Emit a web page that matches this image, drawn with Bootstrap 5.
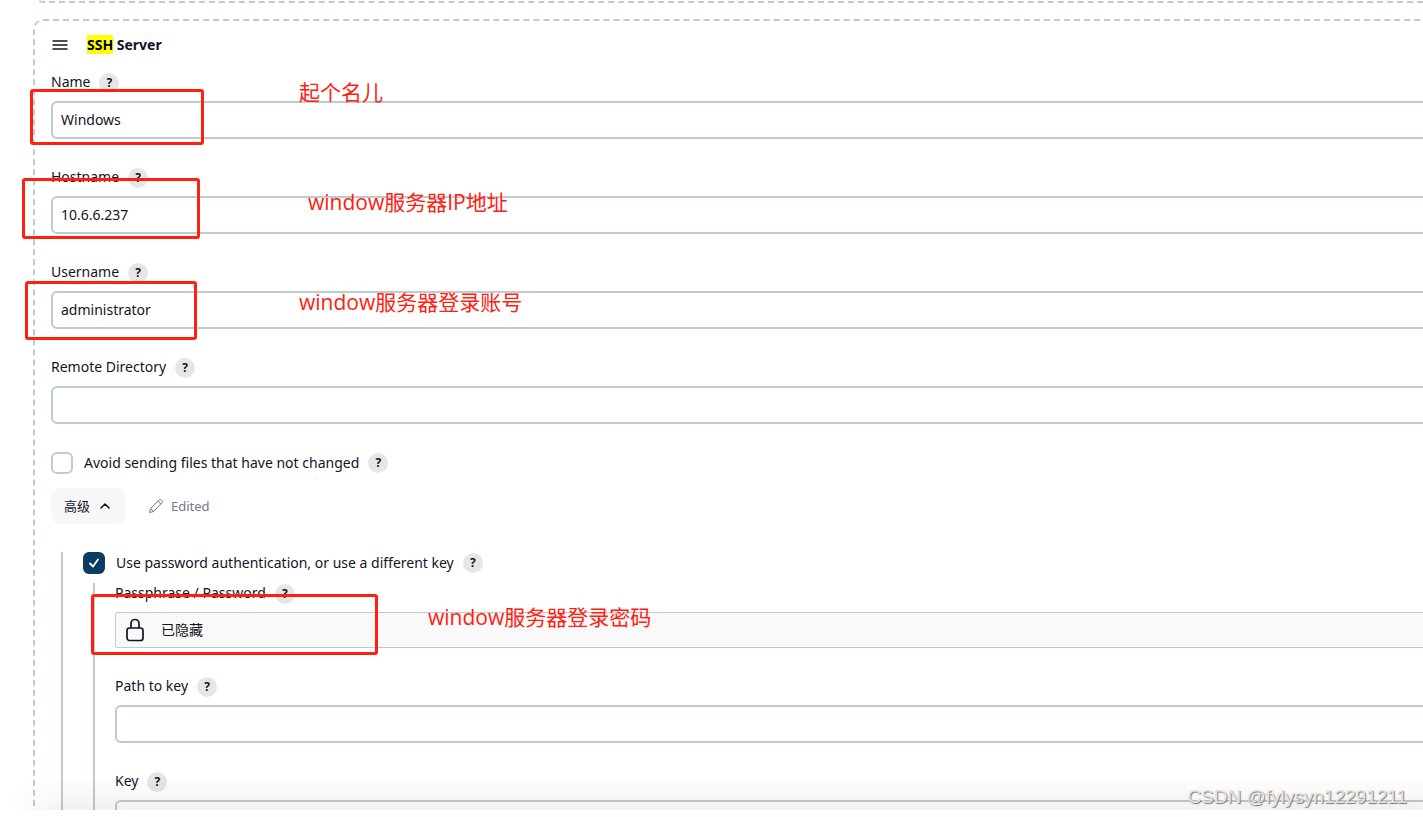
<!DOCTYPE html>
<html lang="zh-CN">
<head>
<meta charset="utf-8">
<meta name="viewport" content="width=device-width, initial-scale=1">
<title>SSH Server</title>
<link href="https://cdn.jsdelivr.net/npm/bootstrap@5.3.0/dist/css/bootstrap.min.css" rel="stylesheet">
<style>
  :root { --line: #c0cbd0; --ink: #14141f; --note: #ff2010; }
  body { font: 14px/20px "Noto Sans", "Noto Sans CJK SC", sans-serif; color: var(--ink); background: #fff; }
  .viewport { height: calc(100vh - 7px); }
  .sheet { margin-left: 33px; margin-right: -40px; }
  .chunk { border: 2px dashed var(--line); border-radius: 10px; padding: 14px 16px; }
  .chunk.chunk-prev { height: 20px; padding: 0; margin-top: -17px; margin-bottom: 16px; }
  .chunk-head { height: 20px; gap: 18px; margin-bottom: 18px; font-size: 14px; }
  .hit { background: #ff0; color: #000; padding: 0; }
  .field { margin-bottom: 29px; }
  .line { height: 20px; gap: 9px; margin-bottom: 8px; }
  .line label, .line span { padding-bottom: 2px; }
  .help { width: 20px; height: 20px; border: 0; border-radius: 50%; background: #e6e6e7; color: var(--ink); font-size: 12px; font-weight: 700; line-height: 20px; padding: 0; text-align: center; }
  .form-control.entry { height: 38px; border: 2px solid var(--line); border-radius: 6px; padding: 0 8px 2px; font-size: 14px; line-height: 20px; color: var(--ink); }
  .tick { height: 20px; gap: 9px; }
  .tick.tick-tall { height: 22px; }
  .form-check-input.box { width: 22px; height: 22px; margin: 0 2px 0 0; border: 2px solid var(--line); border-radius: 6px; float: none; flex: none; }
  .form-check-input.box:checked { background-color: #0b3d62; border-color: #0b3d62; background-size: 16px 16px; background-image: url("data:image/svg+xml,%3csvg xmlns='http://www.w3.org/2000/svg' viewBox='0 0 16 16'%3e%3cpath fill='none' stroke='%23fff' stroke-linecap='round' stroke-linejoin='round' stroke-width='1.8' d='M4 8.500l3 3 5-7'/%3e%3c/svg%3e"); }
  .tools { margin: 15px 0 28px; gap: 22px; }
  .advanced { height: 36px; padding: 0 15px 0 13px; gap: 9px; border: 0; border-radius: 10px; background: #f7f7f9; font-size: 13px; color: var(--ink); }
  .edited { gap: 7px; font-size: 13px; color: #76768c; }
  .nest { border-left: 2px solid var(--line); padding-left: 20px; margin-left: 10px; }
  .nest .nest { margin-top: 9px; padding-top: 1px; }
  .hidden-secret { height: 36px; border: 1px solid var(--line); border-radius: 2px; background: #f9f9f9; padding: 0 9px; gap: 16px; font-size: 14px; }
  /* red call-outs laid over the form */
  .ring { position: absolute; border: 3px solid var(--note); border-radius: 3px; pointer-events: none; z-index: 2; }
  .remark { position: absolute; color: var(--note); font-family: "Open Sans", "Noto Sans CJK SC", sans-serif; font-size: 21px; line-height: 30px; white-space: nowrap; z-index: 2; }
  .on-name .ring { left: -21px; top: 16px; width: 174px; height: 56px; }
  .on-name .remark { left: 248px; top: 4px; }
  .on-host .ring { left: -29px; top: 10px; width: 178px; height: 61px; }
  .on-host .remark { left: 257px; top: 19px; }
  .on-user .ring { left: -26px; top: 18px; width: 172px; height: 59px; }
  .on-user .remark { left: 248px; top: 24px; }
  .on-pass .ring { left: -24px; top: 10px; width: 287px; height: 61px; }
  .on-pass .remark { left: 313px; top: 18px; }
  .fade-bar { position: absolute; left: 0; right: 0; bottom: 0; height: 34px; background: linear-gradient(rgba(0,0,0,0), rgba(0,0,0,.055)); -webkit-mask-image: linear-gradient(90deg, transparent 10px, #000 70px); mask-image: linear-gradient(90deg, transparent 10px, #000 70px); pointer-events: none; }
  .stamp { position: absolute; right: 16px; bottom: 0; font: 19px/26px "Liberation Sans", Arial, sans-serif; color: #e4e4e4; text-shadow: 1px 1px 1px #777; }
</style>
</head>
<body>
<main class="viewport position-relative overflow-hidden">
  <div class="sheet">
    <div class="chunk chunk-prev"></div>
    <form class="chunk">
      <div class="chunk-head d-flex align-items-center fw-bold">
        <svg width="18" height="12" viewBox="0 0 18 12" fill="none" stroke="currentColor" stroke-linecap="round" stroke-width="1.5" aria-hidden="true"><path d="M2 2H16M2 6H16M2 10H16"/></svg>
        <span><mark class="hit">SSH</mark> Server</span>
      </div>

      <div class="field position-relative on-name">
        <div class="line d-flex align-items-center"><label for="name">Name</label><button type="button" class="help">?</button></div>
        <input id="name" class="form-control entry" type="text" value="Windows">
        <span class="ring"></span><span class="remark">起个名儿</span>
      </div>
      <div class="field position-relative on-host">
        <div class="line d-flex align-items-center"><label for="host">Hostname</label><button type="button" class="help">?</button></div>
        <input id="host" class="form-control entry" type="text" value="10.6.6.237">
        <span class="ring"></span><span class="remark">window服务器IP地址</span>
      </div>
      <div class="field position-relative on-user">
        <div class="line d-flex align-items-center"><label for="user">Username</label><button type="button" class="help">?</button></div>
        <input id="user" class="form-control entry" type="text" value="administrator">
        <span class="ring"></span><span class="remark">window服务器登录账号</span>
      </div>
      <div class="field">
        <div class="line d-flex align-items-center"><label for="dir">Remote Directory</label><button type="button" class="help">?</button></div>
        <input id="dir" class="form-control entry" type="text">
      </div>

      <div class="tick d-flex align-items-center">
        <input id="avoid" class="form-check-input box" type="checkbox"><label for="avoid">Avoid sending files that have not changed</label><button type="button" class="help">?</button>
      </div>

      <div class="tools d-flex align-items-center">
        <button type="button" class="advanced d-flex align-items-center">高级
          <svg width="12" height="12" viewBox="0 0 12 12" fill="none" stroke="currentColor" stroke-width="1.600" stroke-linecap="round" stroke-linejoin="round" aria-hidden="true"><path d="M2 8l4-4 4 4"/></svg>
        </button>
        <span class="edited d-flex align-items-center">
          <svg width="16" height="16" viewBox="0 0 16 16" fill="none" stroke="currentColor" stroke-linejoin="round" aria-hidden="true"><path d="M1.500 14.500l1-4L11.300 1.900q1.100-.9 2.200.1l.5.5q1 1.100.1 2.200L5.500 13.500zM10 3.200L12.800 6M2.500 10.500l3 3"/></svg>
          Edited
        </span>
      </div>

      <div class="nest">
        <div class="tick tick-tall d-flex align-items-center">
          <input id="usepw" class="form-check-input box" type="checkbox" checked><label for="usepw">Use password authentication, or use a different key</label><button type="button" class="help">?</button>
        </div>
        <div class="nest">
          <div class="field position-relative on-pass">
            <div class="line d-flex align-items-center"><span>Passphrase / Password</span><button type="button" class="help">?</button></div>
            <div class="hidden-secret d-flex align-items-center">
              <svg width="20" height="24" viewBox="0 0 20 24" fill="none" stroke="currentColor" stroke-width="1.700" aria-hidden="true"><rect x="2" y="10" width="16" height="12.500" rx="2.500"/><path d="M6 10V5.500a4 4 0 0 1 8 0V10"/></svg>
              <span>已隐藏</span>
            </div>
            <span class="ring"></span><span class="remark">window服务器登录密码</span>
          </div>
          <div class="field">
            <div class="line d-flex align-items-center"><label for="path">Path to key</label><button type="button" class="help">?</button></div>
            <input id="path" class="form-control entry" type="text">
          </div>
          <div class="field">
            <div class="line d-flex align-items-center"><label for="key">Key</label><button type="button" class="help">?</button></div>
            <textarea id="key" class="form-control entry"></textarea>
          </div>
        </div>
      </div>
    </form>
  </div>
  <div class="fade-bar"></div>
  <div class="stamp">CSDN @fylysyn12291211</div>
</main>
<script src="https://cdn.jsdelivr.net/npm/bootstrap@5.3.0/dist/js/bootstrap.bundle.min.js"></script>
</body>
</html>
